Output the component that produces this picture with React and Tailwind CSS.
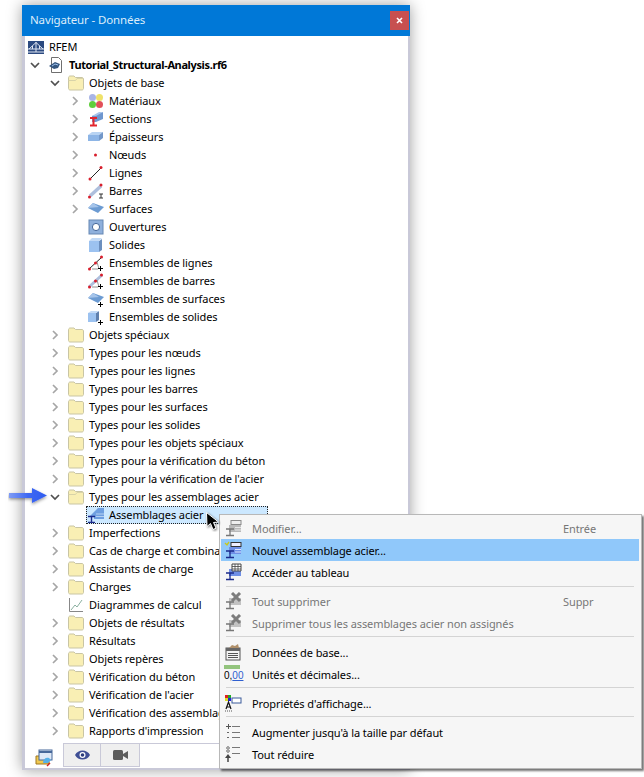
import React from "react";

const Plus = () => <path d="M12.5 11v5M10 13.5h5" stroke="#000" strokeWidth="1" fill="none" />;
const S = ({ children, w = 16, h = 16 }) => (
  <svg width={w} height={h} viewBox={`0 0 ${w} ${h}`} className="block shrink-0">{children}</svg>
);

const Folder = ({ open }) => (
  <S w={16} h={16}>
    <path d="M.5 3c0-1 .5-2 1.500-2h4l1.500 1.500h6.500c.6 0 1.500.5 1.500 1.500v9.500c0 .5-.5 1.500-1.500 1.500H2c-1 0-1.500-1-1.500-1.500z" fill="#f9efb4" stroke="#c9c5a4" />
    {open && <path d="M.5 5.500h7l1.500-2h6" fill="none" stroke="#d8d3a8" />}
  </S>
);
const Rfem = () => (
  <S w={16} h={13}>
    <rect x="0" y="0" width="16" height="13" fill="#2c4a80" />
    <path d="M0 8h16M0 11h16M8 1v10M8 1.500L1 8M8 1.500L15 8M4.500 5v3M11.500 5v3" stroke="#dfe6f2" strokeWidth="1" fill="none" />
  </S>
);
const FileIco = () => (
  <S>
    <path d="M3.500.5h7l3 3v12h-10z" fill="#fff" stroke="#6f6f6f" />
    <path d="M1 9l6-4 5 2-2 4-4 1z" fill="#35567f" />
    <path d="M4 9l3-2 3 1" stroke="#9dc0ea" fill="none" />
  </S>
);
const Materials = () => (
  <S>
    <circle cx="4.500" cy="4.500" r="3.500" fill="#a9b5e6" />
    <circle cx="11.500" cy="4.500" r="3.500" fill="#efe26a" />
    <circle cx="4.500" cy="11.500" r="3.500" fill="#5fce3c" />
    <circle cx="11.500" cy="11.500" r="3.500" fill="#e2505a" />
  </S>
);
const Sections = () => (
  <S>
    <path d="M4 5l11-4v7L8 11H4z" fill="#6f97cf" />
    <path d="M4 5h4l7-4H11z" fill="#a9c6ec" />
    <path d="M2 7h7M5.500 7v7.500M2 14.500h7" stroke="#e3262e" strokeWidth="2" fill="none" />
  </S>
);
const Thick = () => (
  <S>
    <path d="M0 6h11v6H0z" fill="#8db5e6" />
    <path d="M0 6l4-3h11l-4 3z" fill="#b8d3f2" />
    <path d="M11 6l4-3v6l-4 3z" fill="#7398c9" />
  </S>
);
const Dot = () => (
  <S><circle cx="7.500" cy="8" r="1.500" fill="#d81e2c" /></S>
);
const Line = () => (
  <S>
    <path d="M2 14L13 3" stroke="#222" strokeWidth="1" />
    <circle cx="2" cy="14" r="1.500" fill="#d81e2c" />
    <circle cx="13" cy="2.500" r="1.500" fill="#d81e2c" />
  </S>
);
const Bar = () => (
  <S>
    <path d="M2 13L13 3" stroke="#aebfdd" strokeWidth="3.500" />
    <circle cx="1.500" cy="14" r="1.500" fill="#d81e2c" />
    <circle cx="13" cy="2" r="1.500" fill="#d81e2c" />
    <path d="M11 11h4M13 11v4M11 15h4" stroke="#333" strokeWidth="1" fill="none" />
  </S>
);
const Surface = ({ plus }) => (
  <S>
    <path d="M0 7l5-5 11 4-6 6z" fill="#6c9bd2" />
    <path d="M0 7l5-5 6 4z" fill="#a5c4ea" />
    {plus && <Plus />}
  </S>
);
const Opening = () => (
  <S>
    <rect x="1" y="1" width="14" height="14" fill="#8fb0dc" stroke="#6688b4" />
    <circle cx="8" cy="8" r="3.600" fill="#fff" stroke="#47689a" />
  </S>
);
const Solid = () => (
  <S>
    <path d="M1 4h10v11H1z" fill="#9cc2f0" />
    <path d="M11 4l3-2v11l-3 2z" fill="#6c8fbe" />
    <path d="M1 4l3-3h10l-3 3z" fill="#c3daf6" />
  </S>
);
const SolidSet = () => (
  <S>
    <path d="M0 4h8v9H0z" fill="#9cc2f0" />
    <path d="M8 4l3-2v9l-3 2z" fill="#5f80ae" />
    <path d="M0 4l3-2h8L8 4z" fill="#c3daf6" />
    <Plus />
  </S>
);
const LineSet = ({ bar }) => (
  <S>
    <path d="M1 14L14 2" stroke={bar ? "#aebfdd" : "#222"} strokeWidth={bar ? 3 : 1} />
    <path d="M4 14h6M9 7l2 7" stroke="#777" strokeWidth=".8" fill="none" />
    <circle cx="1.500" cy="14" r="1.500" fill="#d81e2c" />
    <circle cx="7.500" cy="8" r="1.500" fill="#d81e2c" />
    <circle cx="13.500" cy="2" r="1.500" fill="#d81e2c" />
    <Plus />
  </S>
);
const Assembly = () => (
  <S>
    <path d="M2 9L10 1h6v11H6v-3z" fill="#6f9fe0" />
    <path d="M8 7h8M8 9.500h8" stroke="#b8d2f2" fill="none" />
    <path d="M0 9.500h7M3.500 10v5M0 15.500h7" stroke="#1b2b8c" strokeWidth="1.400" fill="none" />
  </S>
);

const MenuBase = ({ c = "#1b2b8c", fill = "#6f8fe6", children }) => (
  <S w={18} h={18}>
    <rect x="5" y="6" width="12" height="7" fill={fill} />
    <path d="M2 10h8M6 10v6M2 16.500h8" stroke={c} strokeWidth="1.300" fill="none" />
    {children}
  </S>
);
const MenuEdit = () => (
  <MenuBase c="#777" fill="#b9b9b9">
    <rect x="7" y="1.500" width="10" height="4" fill="#eee" stroke="#8a8a8a" />
    <path d="M11 8.500h6M11 11h6" stroke="#e8e8e8" />
  </MenuBase>
);
const MenuNew = () => (
  <MenuBase>
    <rect x="7" y="1.500" width="10" height="4" fill="#eef" stroke="#333" />
    <path d="M11 8.500h6M11 11h6" stroke="#dde6ff" />
    <path d="M1 2l2 2 2-3" stroke="#c8c820" strokeWidth="1.400" fill="none" />
  </MenuBase>
);
const MenuTable = () => (
  <MenuBase>
    <path d="M8 1h9v7H8z" fill="#fff" stroke="#444" />
    <path d="M11 1v7M14 1v7M8 3.500h9M8 6h9" stroke="#444" strokeWidth=".8" />
  </MenuBase>
);
const MenuDel = () => (
  <MenuBase c="#777" fill="#c2c2c2">
    <path d="M8 1l8 8M16 1L8 9" stroke="#7d7d7d" strokeWidth="3" />
  </MenuBase>
);
const MenuData = () => (
  <S w={18} h={18}>
    <rect x="2" y="5" width="14" height="12" fill="#f4f4f4" stroke="#555" />
    <rect x="2" y="5" width="14" height="3" fill="#666" />
    <path d="M4 10.500h10M4 12.500h10M4 14.500h10" stroke="#555" />
    <path d="M5 5l3-3 3 1 3-2 1 4z" fill="#b0906a" />
  </S>
);
const MenuUnits = () => (
  <div className="relative w-[18px] h-[18px]">
    <div className="h-[4px] w-[16px] bg-[#93c47d]" />
    <div className="absolute left-0 top-[4px] text-[10px] leading-[13px] tracking-normal font-['Liberation_Sans',sans-serif]">
      <span className="text-black">0,</span>
      <span className="text-[#2f5fd0] underline">00</span>
    </div>
  </div>
);
const MenuDisplay = () => (
  <S w={18} h={18}>
    <rect x="1" y="1" width="3" height="3" fill="#d22" />
    <rect x="4" y="1" width="3" height="3" fill="#2a2" />
    <rect x="1" y="4" width="3" height="3" fill="#dd2" />
    <rect x="4" y="4" width="3" height="3" fill="#22d" />
    <rect x="8" y="4" width="9" height="5" fill="#fff" stroke="#3a5a9a" />
    <path d="M2 15l2.500-7 2.500 7M3 13h3" stroke="#111" strokeWidth="1.200" fill="none" />
    <path d="M1 17h7" stroke="#555" strokeDasharray="1 1" />
  </S>
);
const MenuExpand = () => (
  <S w={18} h={18}>
    <path d="M2 3.500h5M4.500 1v5" stroke="#555" />
    <path d="M8 3.500h8M8 9.500h8M8 14.500h8" stroke="#777" />
    <path d="M3 9.500h2M3 14.500h2" stroke="#666" />
  </S>
);
const MenuCollapse = () => (
  <S w={18} h={18}>
    <path d="M4 1v1M4 4v1M4 7v1M2 3h4M2 6h4" stroke="#555" />
    <path d="M8 2.500h8M8 8.500h8" stroke="#777" />
    <path d="M4 9l3 4H1z" fill="#444" />
    <path d="M4 13v4" stroke="#444" strokeWidth="1.500" />
  </S>
);

const Chevron = ({ open }) =>
  open ? (
    <svg width="10" height="7" viewBox="0 0 10 7" className="block"><path d="M1 1l4 4 4-4" stroke="#4f4f4f" strokeWidth="1.700" fill="none" /></svg>
  ) : (
    <svg width="7" height="10" viewBox="0 0 7 10" className="block"><path d="M1 1l4 4-4 4" stroke="#a6a6a6" strokeWidth="1.700" fill="none" /></svg>
  );

const rows = [
  { l: -1, t: "RFEM", i: <Rfem /> },
  { l: 0, t: "Tutorial_Structural-Analysis.rf6", i: <FileIco />, c: "open", b: true },
  { l: 1, t: "Objets de base", i: <Folder open />, c: "open" },
  { l: 2, t: "Matériaux", i: <Materials />, c: "closed" },
  { l: 2, t: "Sections", i: <Sections />, c: "closed" },
  { l: 2, t: "Épaisseurs", i: <Thick />, c: "closed" },
  { l: 2, t: "Nœuds", i: <Dot />, c: "closed" },
  { l: 2, t: "Lignes", i: <Line />, c: "closed" },
  { l: 2, t: "Barres", i: <Bar />, c: "closed" },
  { l: 2, t: "Surfaces", i: <Surface />, c: "closed" },
  { l: 2, t: "Ouvertures", i: <Opening /> },
  { l: 2, t: "Solides", i: <Solid /> },
  { l: 2, t: "Ensembles de lignes", i: <LineSet /> },
  { l: 2, t: "Ensembles de barres", i: <LineSet bar /> },
  { l: 2, t: "Ensembles de surfaces", i: <Surface plus /> },
  { l: 2, t: "Ensembles de solides", i: <SolidSet /> },
  ...[
    "Objets spéciaux",
    "Types pour les nœuds",
    "Types pour les lignes",
    "Types pour les barres",
    "Types pour les surfaces",
    "Types pour les solides",
    "Types pour les objets spéciaux",
    "Types pour la vérification du béton",
    "Types pour la vérification de l'acier",
  ].map((t) => ({ l: 1, t, i: <Folder />, c: "closed" })),
  { l: 1, t: "Types pour les assemblages acier", i: <Folder open />, c: "open" },
  { l: 2, t: "Assemblages acier", i: <Assembly />, sel: true },
  ...[
    "Imperfections",
    "Cas de charge et combinaisons",
    "Assistants de charge",
    "Charges",
  ].map((t) => ({ l: 1, t, i: <Folder />, c: "closed" })),
  {
    l: 1,
    t: "Diagrammes de calcul",
    i: (
      <S>
        <path d="M1.500 1v13.500H15" stroke="#888" fill="none" />
        <path d="M3 13l4-5 2 2 5-7" stroke="#8ab0a0" fill="none" />
      </S>
    ),
  },
  ...[
    "Objets de résultats",
    "Résultats",
    "Objets repères",
    "Vérification du béton",
    "Vérification de l'acier",
    "Vérification des assemblages",
    "Rapports d'impression",
  ].map((t) => ({ l: 1, t, i: <Folder />, c: "closed" })),
];

const pad = { "-1": "pl-0", 0: "pl-0", 1: "pl-5", 2: "pl-10" };

function Row({ r }) {
  return (
    <div
      className={`h-[18px] flex items-center whitespace-nowrap ${pad[r.l]} ${
        r.sel ? "relative" : ""
      }`}
    >
      {r.l >= 0 && (
        <span className="w-5 flex justify-center items-center shrink-0">
          {r.c && <Chevron open={r.c === "open"} />}
        </span>
      )}
      {r.sel && (
        <span className="absolute left-[61px] top-0 w-[182px] h-[18px] bg-[#cce8ff] border border-dotted border-[#222]" />
      )}
      <span className="w-5 pl-[3px] flex items-center shrink-0 relative">{r.i}</span>
      <span className={`ml-1 relative ${r.b ? "font-bold tracking-[-0.37px]" : ""}`}>{r.t}</span>
    </div>
  );
}

const menu = [
  { t: "Modifier...", i: <MenuEdit />, s: "Entrée", d: true },
  { t: "Nouvel assemblage acier...", i: <MenuNew />, h: true },
  { t: "Accéder au tableau", i: <MenuTable /> },
  { sep: "h-[7px] pt-[3px]" },
  { t: "Tout supprimer", i: <MenuDel />, s: "Suppr", d: true },
  { t: "Supprimer tous les assemblages acier non assignés", i: <MenuDel />, d: true },
  { sep: "h-[7px] pt-[2px]" },
  { t: "Données de base...", i: <MenuData /> },
  { t: "Unités et décimales...", i: <MenuUnits /> },
  { sep: "h-[7px] pt-[2px]" },
  { t: "Propriétés d'affichage...", i: <MenuDisplay /> },
  { sep: "h-[7px] pt-[2px]" },
  { t: "Augmenter jusqu'à la taille par défaut", i: <MenuExpand /> },
  { t: "Tout réduire", i: <MenuCollapse /> },
];

function Menu() {
  return (
    <div className="absolute left-[219px] top-[514px] w-[423px] h-[255px] bg-[#f6f6f6] border border-[#b8b8b8] shadow-[2px_2px_2px_rgba(0,0,0,0.55)] pt-[2px] pl-[1px] pr-[2px]">
      {menu.map((m, i) =>
        m.sep ? (
          <div key={i} className={m.sep}>
            <div className="ml-[5px] mr-[5px] h-[1px] bg-[#d4d4d4]" />
          </div>
        ) : (
          <div
            key={i}
            className={`h-[22px] flex items-center whitespace-nowrap ${
              m.h ? "bg-[#90c8fa]" : ""
            } ${m.d ? "text-[#767676]" : "text-black"}`}
          >
            <span className="w-[31px] pl-[3px] flex items-center shrink-0">{m.i}</span>
            <span className="w-[311px] shrink-0 pt-[2px]">{m.t}</span>
            {m.s && <span className="pt-[2px]">{m.s}</span>}
          </div>
        )
      )}
    </div>
  );
}

export default function App() {
  return (
    <div className="relative w-[644px] h-[777px] overflow-hidden bg-white text-[11px] tracking-[-0.09px] text-black font-['Noto_Sans',sans-serif]">
      <div className="ml-[22px] mt-[5px] absolute w-[388px] h-[765px] flex flex-col bg-white shadow-[0_0_14px_rgba(0,0,0,0.38)]">
        <div className="h-[31px] shrink-0 bg-[#0078d7] flex items-center justify-between pl-2 pr-[1px] text-[11.5px] tracking-[-0.13px] text-[#dcecfa]">
          <span className="-mt-[1px]">Navigateur - Données</span>
          <span className="w-[19px] h-[19px] -mt-[1px] bg-[#c75050] flex items-center justify-center">
            <svg width="7" height="7" viewBox="0 0 7 7"><path d="M1 1l5 5M6 1L1 6" stroke="#fff" strokeWidth="1.600" /></svg>
          </span>
        </div>
        <div className="flex-1 flex flex-col border-l-[3px] border-r-[2px] border-b-[2px] border-[#c9c9d8] min-h-0">
          <div className="h-[708px] pt-[2px] overflow-hidden">
            {rows.map((r, i) => <Row key={i} r={r} />)}
          </div>
          <div className="flex-1 flex">
            <div className="w-[38px] flex items-center justify-center pt-[3px]">
              <S w={18} h={18}>
                <path d="M1 7h7l1 1h5v7H1z" fill="#f0c850" stroke="#a07820" />
                <rect x="4" y="1" width="13" height="10" fill="#dfe9f7" stroke="#47689a" />
                <path d="M4 3h13" stroke="#47689a" strokeWidth="2" />
                <path d="M8 14c0-4 3-6 6-5l2 2-3 3z" fill="#55b0e8" />
                <path d="M12 17l3-3" stroke="#c22" strokeWidth="1.500" />
              </S>
            </div>
            <div className="flex-1 border-t border-[#c9c9d8] flex items-start -mt-[1px]">
              <div className="w-[38px] h-[23px] bg-[#efefef] border-r border-b border-l border-[#c9c9d8] flex items-center justify-center">
                <svg width="15" height="10" viewBox="0 0 15 10">
                  <path d="M0 5c3-6 12-6 15 0-3 6-12 6-15 0z" fill="#3f4f95" />
                  <circle cx="7.500" cy="5" r="3" fill="#fff" />
                  <circle cx="7.500" cy="5" r="1.800" fill="#2a3a7a" />
                </svg>
              </div>
              <div className="w-[39px] h-[23px] bg-[#efefef] border-r border-b border-[#c9c9d8] flex items-center justify-center">
                <svg width="15" height="10" viewBox="0 0 15 10">
                  <rect x="0" y="0" width="10" height="10" rx="1.500" fill="#5c5c5c" />
                  <path d="M10 4l5-3v8l-5-3z" fill="#5c5c5c" />
                </svg>
              </div>
            </div>
          </div>
        </div>
      </div>

      <svg width="44" height="24" viewBox="0 0 44 24" className="absolute left-[8px] top-[484px]">
        <defs>
          <filter id="arrowShadow" x="-20%" y="-40%" width="140%" height="200%">
            <feDropShadow dx="0" dy="1.500" stdDeviation="1.500" floodColor="#000" floodOpacity="0.4" />
          </filter>
          <linearGradient id="arrowFill" x1="0" x2="1" y1="0" y2="0">
            <stop offset="0" stopColor="#7f9cf5" />
            <stop offset="0.5" stopColor="#3e68f2" />
            <stop offset="1" stopColor="#2f5cf0" />
          </linearGradient>
        </defs>
        <path d="M1 9h23V4l15 7.500L24 19v-5H1z" fill="url(#arrowFill)" filter="url(#arrowShadow)" />
      </svg>

      <Menu />

      <svg width="18" height="22" viewBox="0 0 18 22" className="absolute left-[203px] top-[510px]">
        <path d="M3.500 2.500l.5 14 3.500-3 2.500 6 3-1.300-2.500-5.700 5-.5z" fill="#000" stroke="#fff" strokeWidth="1" style={{ filter: "drop-shadow(1px 1px 1px rgba(0,0,0,.5))" }} />
      </svg>
    </div>
  );
}
